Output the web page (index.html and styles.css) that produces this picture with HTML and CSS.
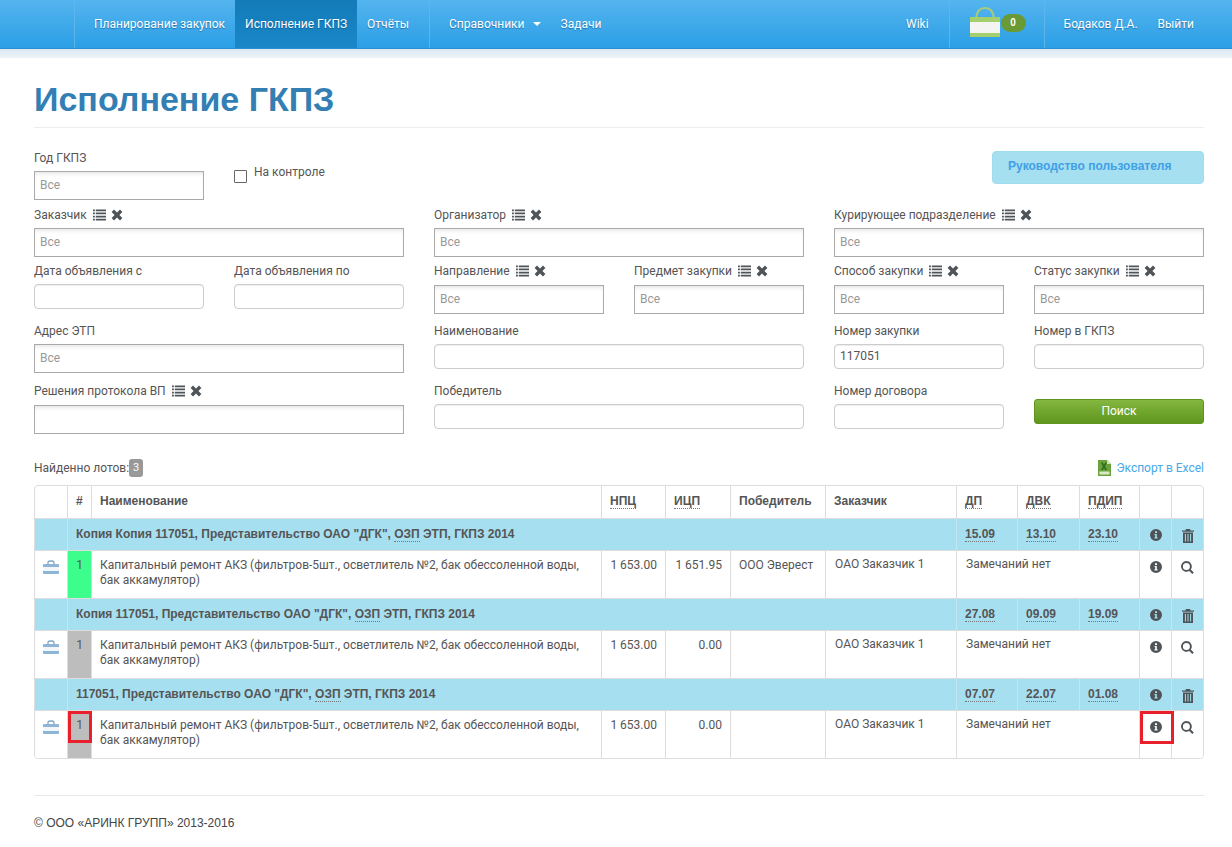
FILE: index.html
```html
<!DOCTYPE html>
<html lang="ru">
<head>
<meta charset="utf-8">
<title>Исполнение ГКПЗ</title>
<link rel="stylesheet" href="styles.css">
</head>
<body>
<svg class="defs" width="0" height="0">
  <symbol id="i-list" viewBox="0 0 14 12"><path d="M0 0h2v2H0zM3 0h11v2H3zM0 3.3h2v2H0zM3 3.3h11v2H3zM0 6.7h2v2H0zM3 6.7h11v2H3zM0 10h2v2H0zM3 10h11v2H3z"/></symbol>
  <symbol id="i-x" viewBox="0 0 12 12"><path d="M3 .6 6 3.6 9 .6 11.4 3 8.4 6 11.4 9 9 11.4 6 8.4 3 11.4.6 9 3.6 6 .6 3z"/></symbol>
  <symbol id="i-info" viewBox="0 0 12 12"><path fill-rule="evenodd" d="M6 0a6 6 0 1 1 0 12A6 6 0 0 1 6 0zM5 2.2v1.8h2V2.200zM4.500 5v1.100H5.200V8.300H4.500V9.500H7.500V8.300H6.800V5z"/></symbol>
  <symbol id="i-search" viewBox="0 0 13 13"><path fill-rule="evenodd" d="M5.400 0a5.400 5.400 0 0 1 4.400 8.500l3 3-1.500 1.500-3-3A5.400 5.400 0 1 1 5.400 0zm0 1.900a3.500 3.500 0 1 0 0 7 3.500 3.500 0 0 0 0-7z"/></symbol>
  <symbol id="i-trash" viewBox="0 0 12 14"><path fill-rule="evenodd" d="M4 0h4l.6 1.500H12v1.300H0V1.500h3.400zM1 3.600h10V14H1zM2.900 5v7.500h1V5zM5.500 5v7.500h1V5zM8.100 5v7.500h1V5z"/></symbol>
  <symbol id="i-case" viewBox="0 0 16 14">
    <path d="M5 5V3q0-2 2-2h2q2 0 2 2v2" fill="none" stroke="#7fa6c6" stroke-width="1.300"/>
    <rect y="4" width="16" height="10" rx="1" fill="#8fb5d6"/>
    <rect y="7" width="16" height="4" fill="#f3f6fa"/>
  </symbol>
</svg>

<header class="navbar">
  <nav class="nav-group nav-main">
    <a class="nav-link nav-first" href="#">Планирование закупок</a>
    <a class="nav-link nav-active" href="#">Исполнение ГКПЗ</a>
    <a class="nav-link" href="#">Отчёты</a>
  </nav>
  <nav class="nav-group">
    <a class="nav-link" href="#">Справочники <span class="caret"></span></a>
    <a class="nav-link" href="#">Задачи</a>
  </nav>
  <div class="nav-spacer"></div>
  <a class="nav-link nav-wiki" href="#">Wiki</a>
  <div class="nav-group nav-cart">
    <svg class="bag" width="32" height="31" viewBox="0 0 32 31">
      <path d="M7 11C8 3 12 1 16 1s8 2 9 10" fill="none" stroke="#a9cc7a" stroke-width="2"/>
      <rect x="1" y="10" width="30" height="20" fill="#a5cf6c"/>
      <rect x="1" y="15" width="30" height="11" fill="#f4f5f2"/>
    </svg>
    <span class="cart-badge">0</span>
  </div>
  <div class="nav-group nav-user">
    <a class="nav-link" href="#">Бодаков Д.А.</a>
    <a class="nav-link" href="#">Выйти</a>
  </div>
</header>
<div class="nav-band"></div>

<main class="page">
  <h1 class="title">Исполнение ГКПЗ</h1>

  <form class="filters">
    <div class="field"><label class="lbl">Год ГКПЗ</label><div class="sel ph">Все</div></div>
    <div class="check-wrap"><span class="check"></span><span>На контроле</span></div>
    <div class="guide-wrap"><a class="guide" href="#">Руководство пользователя</a></div>

    <div class="field span2"><label class="lbl">Заказчик <svg class="ic ic-list"><use href="#i-list"/></svg> <svg class="ic ic-x"><use href="#i-x"/></svg></label><div class="sel ph">Все</div></div>
    <div class="field span2"><label class="lbl">Организатор <svg class="ic ic-list"><use href="#i-list"/></svg> <svg class="ic ic-x"><use href="#i-x"/></svg></label><div class="sel ph">Все</div></div>
    <div class="field span2"><label class="lbl">Курирующее подразделение <svg class="ic ic-list"><use href="#i-list"/></svg> <svg class="ic ic-x"><use href="#i-x"/></svg></label><div class="sel ph">Все</div></div>

    <div class="field"><label class="lbl">Дата объявления с</label><div class="inp"></div></div>
    <div class="field"><label class="lbl">Дата объявления по</label><div class="inp"></div></div>
    <div class="field"><label class="lbl">Направление <svg class="ic ic-list"><use href="#i-list"/></svg> <svg class="ic ic-x"><use href="#i-x"/></svg></label><div class="sel sel-low ph">Все</div></div>
    <div class="field"><label class="lbl">Предмет закупки <svg class="ic ic-list"><use href="#i-list"/></svg> <svg class="ic ic-x"><use href="#i-x"/></svg></label><div class="sel sel-low ph">Все</div></div>
    <div class="field"><label class="lbl">Способ закупки <svg class="ic ic-list"><use href="#i-list"/></svg> <svg class="ic ic-x"><use href="#i-x"/></svg></label><div class="sel sel-low ph">Все</div></div>
    <div class="field"><label class="lbl">Статус закупки <svg class="ic ic-list"><use href="#i-list"/></svg> <svg class="ic ic-x"><use href="#i-x"/></svg></label><div class="sel sel-low ph">Все</div></div>

    <div class="field span2"><label class="lbl">Адрес ЭТП</label><div class="sel ph">Все</div></div>
    <div class="field span2"><label class="lbl">Наименование</label><div class="inp"></div></div>
    <div class="field"><label class="lbl">Номер закупки</label><div class="inp">117051</div></div>
    <div class="field"><label class="lbl">Номер в ГКПЗ</label><div class="inp"></div></div>

    <div class="field span2"><label class="lbl">Решения протокола ВП <svg class="ic ic-list"><use href="#i-list"/></svg> <svg class="ic ic-x"><use href="#i-x"/></svg></label><div class="sel sel-low"></div></div>
    <div class="field span2"><label class="lbl">Победитель</label><div class="inp"></div></div>
    <div class="field"><label class="lbl">Номер договора</label><div class="inp"></div></div>
    <div class="search-wrap"><a class="search-btn" href="#">Поиск</a></div>
  </form>

  <div class="summary">
    <div class="found">Найденно лотов:<span class="count">3</span></div>
    <a class="export" href="#">
      <svg width="13" height="16" viewBox="0 0 13 16"><path d="M0 0h9l4 4v12H0z" fill="#6aa33c"/><path d="M9 0l4 4H9z" fill="#cfe3b5"/><path d="M3 2.500h1.800L6 5l1.200-2.500H9L7 6.500 9 10H7.200L6 8 4.800 10H3l2-3.500z" fill="#2f6b1c"/><rect x="1.500" y="11.500" width="10" height="3" fill="#dbe9c9"/></svg>
      <span>Экспорт в Excel</span>
    </a>
  </div>

  <div class="table-wrap">
    <table class="lots">
      <colgroup>
        <col class="c1"><col class="c2"><col class="c3"><col class="c4"><col class="c5"><col class="c6"><col class="c7"><col class="c8"><col class="c9"><col class="c10"><col class="c11"><col class="c12">
      </colgroup>
      <thead>
        <tr>
          <th></th><th>#</th><th>Наименование</th><th><abbr>НПЦ</abbr></th><th><abbr>ИЦП</abbr></th><th>Победитель</th><th>Заказчик</th><th><abbr>ДП</abbr></th><th><abbr>ДВК</abbr></th><th><abbr>ПДИП</abbr></th><th></th><th></th>
        </tr>
      </thead>
      <tbody>
        <tr class="group">
          <td></td><td colspan="6">Копия Копия 117051, Представительство ОАО "ДГК", <abbr>ОЗП</abbr> ЭТП, ГКПЗ 2014</td>
          <td><abbr>15.09</abbr></td><td><abbr>13.10</abbr></td><td><abbr>23.10</abbr></td>
          <td class="ctr"><svg class="ic ic-info"><use href="#i-info"/></svg></td><td class="ctr"><svg class="ic ic-trash"><use href="#i-trash"/></svg></td>
        </tr>
        <tr class="lot">
          <td class="ctr-icon"><svg class="ic-case"><use href="#i-case"/></svg></td><td class="num num-green">1</td>
          <td>Капитальный ремонт АКЗ (фильтров-5шт., осветлитель №2, бак обессоленной воды, бак аккамулятор)</td>
          <td class="r">1 653.00</td><td class="r">1 651.95</td><td>ООО Эверест</td><td class="cust">ОАО Заказчик 1</td><td colspan="3" class="cust">Замечаний нет</td>
          <td class="ctr"><svg class="ic ic-info"><use href="#i-info"/></svg></td><td class="ctr"><svg class="ic ic-search"><use href="#i-search"/></svg></td>
        </tr>
        <tr class="group">
          <td></td><td colspan="6">Копия 117051, Представительство ОАО "ДГК", <abbr>ОЗП</abbr> ЭТП, ГКПЗ 2014</td>
          <td><abbr>27.08</abbr></td><td><abbr>09.09</abbr></td><td><abbr>19.09</abbr></td>
          <td class="ctr"><svg class="ic ic-info"><use href="#i-info"/></svg></td><td class="ctr"><svg class="ic ic-trash"><use href="#i-trash"/></svg></td>
        </tr>
        <tr class="lot">
          <td class="ctr-icon"><svg class="ic-case"><use href="#i-case"/></svg></td><td class="num num-gray">1</td>
          <td>Капитальный ремонт АКЗ (фильтров-5шт., осветлитель №2, бак обессоленной воды, бак аккамулятор)</td>
          <td class="r">1 653.00</td><td class="r">0.00</td><td></td><td class="cust">ОАО Заказчик 1</td><td colspan="3" class="cust">Замечаний нет</td>
          <td class="ctr"><svg class="ic ic-info"><use href="#i-info"/></svg></td><td class="ctr"><svg class="ic ic-search"><use href="#i-search"/></svg></td>
        </tr>
        <tr class="group">
          <td></td><td colspan="6">117051, Представительство ОАО "ДГК", <abbr>ОЗП</abbr> ЭТП, ГКПЗ 2014</td>
          <td><abbr>07.07</abbr></td><td><abbr>22.07</abbr></td><td><abbr>01.08</abbr></td>
          <td class="ctr"><svg class="ic ic-info"><use href="#i-info"/></svg></td><td class="ctr"><svg class="ic ic-trash"><use href="#i-trash"/></svg></td>
        </tr>
        <tr class="lot">
          <td class="ctr-icon"><svg class="ic-case"><use href="#i-case"/></svg></td><td class="num num-gray has-mark">1<span class="mark mark-num"></span></td>
          <td>Капитальный ремонт АКЗ (фильтров-5шт., осветлитель №2, бак обессоленной воды, бак аккамулятор)</td>
          <td class="r">1 653.00</td><td class="r">0.00</td><td></td><td class="cust">ОАО Заказчик 1</td><td colspan="3" class="cust">Замечаний нет</td>
          <td class="ctr has-mark"><svg class="ic ic-info"><use href="#i-info"/></svg><span class="mark mark-info"></span></td><td class="ctr"><svg class="ic ic-search"><use href="#i-search"/></svg></td>
        </tr>
      </tbody>
    </table>
  </div>

  <footer class="footer">© ООО «АРИНК ГРУПП» 2013-2016</footer>
</main>
</body>
</html>
```

FILE: styles.css
```css
* { box-sizing: border-box; }
html, body { margin: 0; padding: 0; }
body {
  font-family: Roboto, "Liberation Sans", sans-serif;
  font-size: 12px;
  line-height: 16px;
  color: #555;
  background: #fff;
  min-height: 847px;
  overflow: hidden;
}
a { text-decoration: none; }
.defs { display: block; height: 0; }

/* navbar */
.navbar {
  height: 49px;
  display: flex;
  align-items: stretch;
  padding-left: 74px;
  background: linear-gradient(#54b4ee, #2b9fe6);
  border-bottom: 1px solid #2a8fd6;
}
.nav-group {
  display: flex;
  align-items: stretch;
  border-left: 1px solid #5cb5ed;
  padding: 0 10px 0 9px;
}
.nav-main { padding-left: 9px; }
.nav-link {
  display: flex;
  align-items: center;
  gap: 5px;
  padding: 0 10px;
  color: #fff;
  font-size: 12px;
  text-shadow: 0 1px 1px rgba(0, 50, 100, .45);
  white-space: pre;
}
.nav-first { padding-left: 10px; }
.nav-active {
  background: linear-gradient(#137bb8, #1a87c9);
}
.caret {
  width: 0; height: 0;
  border-left: 4px solid transparent;
  border-right: 4px solid transparent;
  border-top: 4px solid #fff;
}
.nav-spacer { flex: 1; }
.nav-wiki { padding-right: 20px; }
.nav-cart {
  width: 95px;
  padding: 7px 0 0 19px;
  align-items: flex-start;
}
.cart-badge {
  width: 25px; height: 18px;
  margin: 7px 0 0 0;
  border-radius: 9px;
  background: #6a9a35;
  color: #fff;
  font-family: "Liberation Sans", sans-serif;
  font-size: 10px;
  font-weight: bold;
  line-height: 18px;
  text-align: center;
}
.nav-user { padding: 0 28px 0 9px; }
.nav-band {
  height: 9px;
  background: linear-gradient(#dbe8f2, #edf3f8);
}

/* page */
.page { padding: 0 28px 0 34px; }
.title {
  margin: 0;
  height: 70px;
  padding-top: 19px;
  border-bottom: 1px solid #eee;
  color: #337fb3;
  font-family: "Liberation Sans", sans-serif;
  font-size: 34px;
  font-weight: bold;
  line-height: 44px;
}

/* filters */
.filters {
  display: grid;
  grid-template-columns: repeat(6, 170px);
  grid-template-rows: 57px 56px 60px 60px auto;
  column-gap: 30px;
  padding-top: 21px;
}
.span2 { grid-column: span 2; }
.lbl {
  display: flex;
  align-items: center;
  gap: 3px;
  height: 22px;
  padding-bottom: 4px;
  white-space: pre;
}
.sel {
  height: 29px;
  padding-left: 5px;
  border: 1px solid #aaa;
  background: #fff;
  box-shadow: inset 0 4px 5px -3px rgba(0, 0, 0, .13);
  line-height: 27px;
}
.sel-low { margin-top: 1px; }
.ph { color: #999; }
.inp {
  height: 25px;
  padding-left: 5px;
  border: 1px solid #ccc;
  border-radius: 4px;
  box-shadow: inset 0 1px 1px rgba(0, 0, 0, .07);
  line-height: 23px;
}
.ic { fill: #4f5459; flex: none; }
.ic-list { width: 13px; height: 12px; margin-left: 0; }
.ic-x { width: 12px; height: 12px; margin-left: 2px; }
.ic-info { width: 12px; height: 12px; display: block; margin: 0 auto; }
.ic-search { width: 13px; height: 13px; display: block; margin: 0 auto; }
.ic-trash { width: 12px; height: 14px; display: block; margin: 0 auto; }
.check-wrap {
  display: flex;
  align-items: flex-start;
  gap: 7px;
  padding-top: 15px;
}
.check {
  width: 13px; height: 13px;
  margin-top: 6px;
  border: 1px solid #666;
  border-radius: 1px;
  background: #fff;
}
.guide-wrap {
  grid-column: 5 / span 2;
  display: flex;
  justify-content: flex-end;
  padding-top: 2px;
}
.guide {
  width: 212px; height: 33px;
  padding-left: 15px;
  border: 1px solid #a0dcef;
  border-radius: 4px;
  background: #a6dff0;
  color: #3fa0e6;
  font-family: "Liberation Sans", sans-serif;
  font-size: 12px;
  font-weight: bold;
  line-height: 29px;
}
.search-wrap { padding-top: 17px; }
.search-btn {
  display: block;
  height: 25px;
  border: 1px solid #5f9420;
  border-radius: 3px;
  background: linear-gradient(#84b73f, #5e961e);
  color: #fff;
  line-height: 23px;
  text-align: center;
}

/* summary */
.summary {
  display: flex;
  justify-content: space-between;
  align-items: center;
  height: 20px;
  margin-top: 24px;
}
.found { display: flex; align-items: center; }
.count {
  width: 14px; height: 18px;
  border-radius: 3px;
  background: #999;
  color: #fff;
  font-size: 11px;
  line-height: 18px;
  text-align: center;
}
.export {
  display: flex;
  align-items: center;
  gap: 5px;
  color: #4aa8e8;
}

/* table */
.table-wrap {
  width: 1170px;
  margin-top: 7px;
  border: 1px solid #ddd;
  border-radius: 4px;
  overflow: hidden;
}
.lots {
  width: 1168px;
  table-layout: fixed;
  border-collapse: separate;
  border-spacing: 0;
}
.c1 { width: 32px; } .c2 { width: 24px; } .c3 { width: 510px; } .c4 { width: 64px; }
.c5 { width: 65px; } .c6 { width: 95px; } .c7 { width: 131px; } .c8 { width: 61px; }
.c9 { width: 62px; } .c10 { width: 60px; } .c11 { width: 32px; } .c12 { width: 32px; }
.lots th, .lots td {
  padding: 7px 8px;
  border-left: 1px solid #ddd;
  border-top: 1px solid #ddd;
  vertical-align: top;
  text-align: left;
}
.lots th:first-child, .lots td:first-child { border-left: 0; }
.lots thead th {
  height: 32px;
  border-top: 0;
  padding-top: 7px;
  font-family: "Liberation Sans", sans-serif;
  font-size: 12px;
  font-weight: bold;
}
abbr { border-bottom: 1px dotted #777; }
.group td {
  height: 32px;
  background: #a6dff0;
  border-left-color: #c3e7f2;
  font-family: "Liberation Sans", sans-serif;
  font-weight: bold;
}
.lot td { height: 48px; background: #fff; line-height: 15px; }
.lots td.r { text-align: right; }
.lots td.cust { padding-left: 9px; padding-top: 6px; }
.lots td.ctr { padding-left: 0; padding-right: 0; padding-top: 10px; }
.lots td.ctr-icon { padding: 9px 0 0 8px; }
.ic-case { display: block; width: 16px; height: 14px; }
.lots td.num { padding-left: 0; padding-right: 0; text-align: center; }
.lots td.num-green { background: #3dfd8c; }
.lots td.num-gray { background: #bdbdbd; }
.has-mark { position: relative; }
.mark {
  position: absolute;
  border: 3px solid #e8202c;
  pointer-events: none;
}
.mark-num { left: 0; top: 0; width: 24px; height: 32px; }
.mark-info { left: 0; top: 0; width: 34px; height: 33px; }

/* footer */
.footer {
  width: 1170px;
  margin-top: 36px;
  padding-top: 19px;
  border-top: 1px solid #e8e8e8;
  color: #444;
  font-family: "Liberation Sans", sans-serif;
  font-size: 12px;
}
```
